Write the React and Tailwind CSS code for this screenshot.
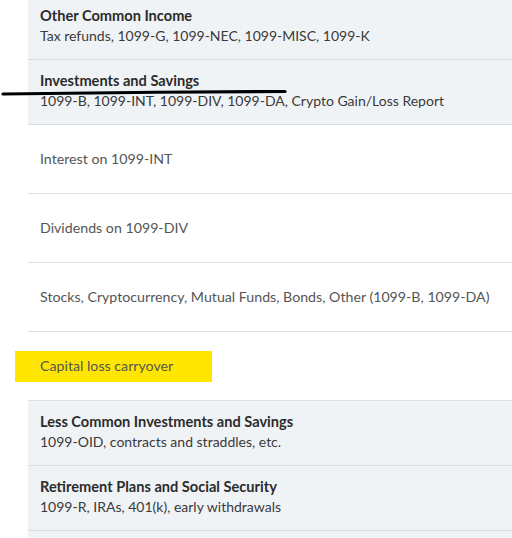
const font = { fontFamily: "Lato, 'Open Sans', sans-serif" };

const GrayRow = ({ title, sub, first }) => (
  <div className={`bg-[#f0f3f6] border-b border-[#d7dce1] px-3 ${first ? "pt-[6px] pb-[13px]" : "pt-[11px] pb-[13px]"}`}>
    <div className="text-[14.6px] leading-5 font-bold text-[#2b2b2b]">{title}</div>
    <div className="text-[14px] leading-5 text-[#3a3a3a]">{sub}</div>
  </div>
);

const WhiteRow = ({ children }) => (
  <div className="bg-white border-b border-[#dcdfe3] px-3 py-6">
    <div className="text-[14.2px] leading-5 text-[#555]">{children}</div>
  </div>
);

export default function App() {
  return (
    <div className="relative w-[512px] h-[538px] overflow-hidden bg-white" style={font}>
      <div className="ml-[28px] flex flex-col">
        <GrayRow first title="Other Common Income" sub="Tax refunds, 1099-G, 1099-NEC, 1099-MISC, 1099-K" />
        <GrayRow title="Investments and Savings" sub="1099-B, 1099-INT, 1099-DIV, 1099-DA, Crypto Gain/Loss Report" />
        <WhiteRow>Interest on 1099-INT</WhiteRow>
        <WhiteRow>Dividends on 1099-DIV</WhiteRow>
        <WhiteRow>Stocks, Cryptocurrency, Mutual Funds, Bonds, Other (1099-B, 1099-DA)</WhiteRow>
        <div className="bg-white border-b border-[#dcdfe3] pt-[19px] pb-[18px]">
          <div className="ml-[-13px] w-[197px] h-[31px] bg-[#ffe600] flex items-center pl-[25px] pb-[2px] text-[14.2px] text-[#555]">
            Capital loss carryover
          </div>
        </div>
        <GrayRow title="Less Common Investments and Savings" sub="1099-OID, contracts and straddles, etc." />
        <GrayRow title="Retirement Plans and Social Security" sub="1099-R, IRAs, 401(k), early withdrawals" />
        <div className="bg-[#f0f3f6] h-[20px]" />
      </div>
      <svg className="absolute left-0 top-[88px]" width="290" height="12" viewBox="0 0 290 12">
        <path d="M3 6 C 80 4.5, 200 4, 285 3.5" stroke="#000" strokeWidth="3.2" strokeLinecap="round" fill="none" />
      </svg>
    </div>
  );
}
